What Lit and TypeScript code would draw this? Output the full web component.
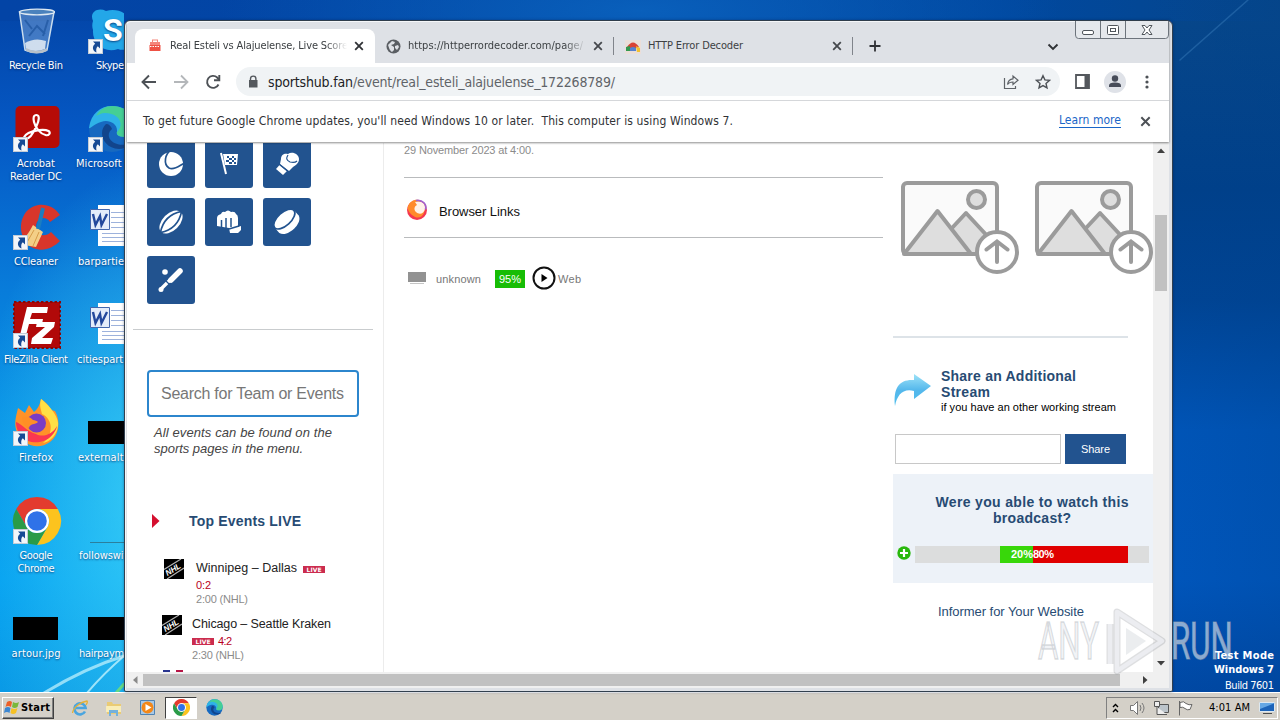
import { LitElement, html, svg, css } from 'lit';
import { customElement, property } from 'lit/decorators.js';

const chromePaths = svg`
  <path fill="#e33b2e" d="M24 12H44.8A24 24 0 0 0 3.2 12L13.6 30A12 12 0 0 1 24 12z"/>
  <path fill="#fcc31e" d="M44.8 12A24 24 0 0 1 24 48L34.4 30A12 12 0 0 0 24 12z"/>
  <path fill="#2a9b48" d="M3.2 12A24 24 0 0 0 24 48L34.4 30A12 12 0 0 1 13.6 30z"/>
  <circle cx="24" cy="24" r="12" fill="#fff"/>
  <circle cx="24" cy="24" r="9.8" fill="#2f72e8"/>`;

const edgePaths = svg`
  <circle cx="24" cy="24" r="23" fill="#1769c0"/>
  <path fill="#2fb3e8" d="M1 23C3 8 13 1 24 1c14 0 23 10 23 20 0 7-5 11-11 11-5 0-8-2-7-5 1-9-9-13-16-10C6 19 2 24 1 23z"/>
  <path fill="#45cf95" d="M24 1c14 0 23 10 23 20 0 7-5 11-11 11-5 0-8-2-7-5 8-8 2-19-12-19-4 0-7 2-9 3C12 4 18 1 24 1z"/>
  <path fill="#12458c" d="M18 19c-8 7-4 24 13 25 5 0 10-2 12-6-9 4-20 1-22-6-1-4 1-6 3-8-1-3-3-5-6-5z"/>`;

const wordPaths = svg`
  <path fill="#fff" d="M14 1H46V42H14z"/>
  <path stroke="#9db2dc" fill="none" d="M27 8.500H46M27 13.500H46M27 18.500H46M27 23.500H46M18 29.500H46M18 33.500H46M18 37.500H46"/>
  <path fill="#e4ecfa" stroke="#4467ad" d="M6.500 5.500h19v20h-19z"/>
  <path fill="none" stroke="#23489c" stroke-width="2.400" d="M9 10l2.500 11 4.500-9 1.500 9 5.500-11"/>`;

const icons: Record<string, unknown> = {
  bin: svg`
    <path fill="#b8d4ee" fill-opacity=".35" stroke="#c9dced" stroke-width="1.500" d="M7.500 4L13 42Q25 47 35 42L42 4z"/>
    <path fill="#e8eef5" fill-opacity=".85" d="M13 35q10-6 21-2l-1 8q-10 4-19 0z"/>
    <path stroke="#184f98" stroke-width="2" fill="none" opacity=".6" d="M17 28l8-10 8 8M13 12l7 9M36 12l-5 16"/>
    <ellipse cx="25" cy="4" rx="17.500" ry="2.800" fill="#4b82bd" stroke="#dfe9f2" stroke-width="1.300"/>
    <path d="M14 40q11 6 21 0v3q-10 5-21 0z" fill="#b7c0c9"/>`,
  skype: svg`
    <path fill="#23a7e8" d="M9 13C5 4 14-1 22 3 36-1 50 8 49 24c5 10-5 21-15 17C20 46 8 35 9 22c-1-3-1-6 0-9z"/>
    <text class="glyph" x="19" y="33" font-size="32">S</text>`,
  acrobat: svg`
    <rect x="3.500" width="44" height="42" rx="5" fill="#b60b06"/>
    <path fill="none" stroke="#fff" stroke-width="2.200" d="M24.500 9c3.500 0 2.500 6 0 11-3 7-7 13-11 13-3 0-1-4 3-6 6-3 16-4 20-2 3 2 0 5-3 4-5-1-10-7-11.500-13-1-4-.500-7 2.500-7z"/>`,
  edge: svg`<g transform="translate(4 -1)">${edgePaths}</g>`,
  ccleaner: svg`
    <path fill="#d8362b" d="M48 11C40-1 24-3 14 8 5 20 9 36 19 43c11 6 22 1 29-6l-9-9c-5 5-12 4-14-1-3-6 1-13 6-13 3 0 5 1 7 4z"/>
    <path fill="#f4cf87" d="M21 21l10 7-7 15-18-3c7-6 11-11 15-19z"/>
    <path stroke="#1b7dc0" stroke-width="4" d="M31 4L26 25"/>
    <path stroke="#d69b48" d="M22 26L14 40M27 28l-6 14" />`,
  word: wordPaths,
  filezilla: svg`
    <rect x="2" y="0" width="46" height="46" fill="#b10909" stroke="#8a0606" stroke-width="2" stroke-dasharray="2.500 2"/>
    <path fill="#fff" d="M15 5h21l-1 6H20l-2 6h13l-1 5H17l-4 15H7zM25 20h18l-1 5-12 11h11l-2 6H19l1-6 13-11h-9z"/>`,
  firefox: svg`
    <path fill="#ff9228" d="M6 8l7 5L17 5l5 7C25 10 28 5 29-1c4 3 8 6 10 11l4 1c6 10 4 25-5 31-11 8-27 4-32-8C1 25 4 17 6 8z"/>
    <path fill="#ffe046" d="M29-1c6 4 19 18 17 27-1 9-8 16-15 17 11-9 10-24-1-29-1-5-3-8-1-15z"/>
    <path fill="#fb3750" d="M4 22c0 15 14 25 30 18 6-3 10-9 11-14-4 8-14 12-21 8C14 31 9 23 4 22z"/>
    <circle cx="24.500" cy="23" r="9.500" fill="#7a3cc4"/>
    <path fill="#ff8f25" d="M10 17c5-1 9 0 11 3 2 0 4 1 5 2-3 3-8 1-9 6-5-2-7-6-7-11z"/>`,
  black: svg`<path d="M1 21H46V44H1z" fill="#000"/>`,
  line: svg`<path d="M6 44.500H48" stroke="#2b7f9d" stroke-width="1"/>`,
  chrome: svg`<g transform="translate(1 -1)">${chromePaths}</g>`,
};

const shortcut = svg`
  <rect x="1.500" y="31.500" width="14" height="14" fill="#f3f6fa" stroke="#c4ccd6"/>
  <path fill="#174a94" d="M6 33.500h7v7l-2.200-2.200C9 40 9 42 9.500 44.500 5 43 5 38 8.200 35.800z"/>`;

const desktopItems = [
  { icon: 'bin', label: ['Recycle Bin', 54] },
  { icon: 'acrobat', label: ['Acrobat', 38, 'Reader DC', 52], link: 1 },
  { icon: 'ccleaner', label: ['CCleaner', 44], link: 1 },
  { icon: 'filezilla', label: ['FileZilla Client', 64], link: 1 },
  { icon: 'firefox', label: ['Firefox', 34], link: 1 },
  { icon: 'chrome', label: ['Google', 33, 'Chrome', 37], link: 1 },
  { icon: 'black', label: ['artour.jpg', 49] },
  { icon: 'skype', label: ['Skype', 28], link: 4, left: 96 },
  { icon: 'edge', label: ['Microsoft Edge', 74], link: 4, left: 76 },
  { icon: 'word', label: ['barparties.rtf', 66], left: 78 },
  { icon: 'word', label: ['citiespartner.rtf', 76], left: 77 },
  { icon: 'black4', label: ['externaltest.jpg', 80], left: 78 },
  { icon: 'line', label: ['followswitch.rtf', 74], left: 79 },
  { icon: 'black4', label: ['hairpayment.jpg', 78], left: 79 },
];

const sports = [
  svg`<circle cx="24" cy="24" r="12" fill="#fff"/><path d="M24 10c-6 4-8 14-2 18 6 3 12-4 16-5" fill="none" stroke="#22538f" stroke-width="1.700"/>`,
  svg`<path d="M16 13l5 21" stroke="#fff" stroke-width="2"/><path d="M18 14h15l-1 11H20z" fill="#fff"/><path fill="#22538f" d="M22 16h2v2h-2zM27 16h2v2h-2zM24 18h3v2h-3zM29 18h2v2h-2zM21 20h3v2h-3zM27 20h2v2h-2zM24 22h3v2h-3zM29 22h2v2h-2z"/>`,
  svg`<path fill="#fff" d="M18 19c0-5 4-6 7-5 4-3 11 0 11 5 0 4-3 6-6 8l-4 4-9-7z"/><path d="M16.500 25l7.500 6-4 4-7-6z" fill="#fff"/><path d="M16.500 24.500l8.500 7M25 15c-2 3-2 5 2 7 4 1 6 0 7-1" fill="none" stroke="#22538f" stroke-width="1.200"/>`,
  svg`<g transform="rotate(-45 24 24)"><ellipse cx="24" cy="24" rx="14" ry="8.500" fill="#fff"/><path d="M9 24Q24 14 39 24Q24 34 9 24" fill="none" stroke="#22538f" stroke-width="1.700"/></g>`,
  svg`<path fill="#fff" d="M12 20q0-3 4-4 1-3 4-2 3-3 6 0 4-1 5 2 2 1 2 4v9l3-1v4l-3 3h-8l-1-5-12-2z"/><path d="M16.500 22v8M21 20v10M26 20v9M24 31l10-3" stroke="#22538f" stroke-width="1.500"/>`,
  svg`<g transform="rotate(-42 24 24)"><path d="M11 20v7c2 9 24 9 26 0v-7z" fill="#fff"/><ellipse cx="24" cy="20" rx="13" ry="6.500" fill="#fff" stroke="#22538f" stroke-width="1.700"/></g>`,
  svg`<circle cx="18" cy="16" r="2.800" fill="#fff"/><path d="M13.500 33.500L24 23" stroke="#fff" stroke-width="3.400"/><path d="M24 24l9-9" stroke="#fff" stroke-width="5.500" stroke-linecap="round"/><circle cx="14" cy="33.500" r="2.500" fill="#fff"/><path d="M19 25l4.500 4.500" stroke="#22538f" stroke-width="1.200"/>`,
];

const cross = (size: number, stroke: string) => html`
  <svg width=${size} height=${size} viewBox="0 0 10 10"><path d="M1.200 1.200l7.600 7.600M8.800 1.200L1.200 8.800" stroke=${stroke} stroke-width="1.800"/></svg>`;

/** One line of text spread over a given width. */
@customElement('fit-text')
export class FitText extends LitElement {
  @property({ type: String }) text = '';
  @property({ type: Number }) width = 0;

  static styles = css`
    :host {
      display: inline-block;
      white-space: pre;
      flex: none;
    }
  `;

  firstUpdated() {
    const span = this.renderRoot.querySelector('span')!;
    const natural = span.getBoundingClientRect().width;
    span.style.letterSpacing = `${(this.width - natural) / (this.text.length - 1)}px`;
    this.style.width = `${this.width}px`;
  }

  render() {
    return html`<span>${this.text}</span>`;
  }
}

const fit = (text: string, width: number, cls = '') =>
  html`<fit-text class=${cls} .text=${text} .width=${width}></fit-text>`;

@customElement('desktop-icons')
export class DesktopIcons extends LitElement {
  static styles = css`
    :host {
      display: grid;
      grid-template-rows: repeat(7, 98px);
      grid-auto-flow: column;
      grid-auto-columns: 72px;
      width: 124px;
      height: 691px;
      overflow: hidden;
      color: #fff;
      font: 11px/13px 'DejaVu Sans Condensed', 'DejaVu Sans', sans-serif;
      text-shadow: 0 1px 2px rgba(0, 30, 90, 0.7);
    }
    .item {
      display: flex;
      flex-direction: column;
      align-items: center;
      padding-top: 8px;
    }
    .item svg {
      overflow: visible;
      margin-bottom: 3px;
      flex: none;
    }
    .cut {
      align-self: flex-start;
    }
    .glyph {
      font-family: Roboto, sans-serif;
      font-style: normal;
      font-weight: 700;
      fill: #fff;
    }
  `;

  render() {
    return desktopItems.map((item) => {
      const [a, aw, b, bw] = item.label as [string, number, string?, number?];
      const name = item.icon === 'black4' ? 'black' : item.icon;
      const shift = item.icon === 'black4' || item.link === 4 ? 3 : 0;
      return html`
        <div class="item">
          <svg width="48" height="48" viewBox="0 0 48 48">
            <g transform=${item.icon === 'black4' ? 'translate(3 0)' : ''}>${icons[name]}</g>
            ${item.link ? svg`<g transform="translate(${shift} 0)">${shortcut}</g>` : ''}
          </svg>
          ${item.left
            ? html`<div class="cut" style="margin-left:${item.left - 72}px">${fit(a, aw)}</div>`
            : fit(a, aw)}
          ${b ? fit(b, bw!) : ''}
        </div>
      `;
    });
  }
}

@customElement('chrome-header')
export class ChromeHeader extends LitElement {
  static styles = css`
    :host {
      display: block;
      position: relative;
      z-index: 1;
      color: #3c4043;
      font: 11px/14px 'DejaVu Sans Condensed', 'DejaVu Sans', sans-serif;
      box-shadow: 0 1px 2px rgba(0, 0, 0, 0.45);
    }
    svg {
      display: block;
      flex: none;
    }
    .tabs {
      display: flex;
      height: 42px;
      box-sizing: border-box;
      padding: 8px 0 0 8px;
    }
    .tab {
      display: flex;
      align-items: center;
      width: 238px;
      height: 34px;
      box-sizing: border-box;
      padding: 0 10px 0 11px;
    }
    .tab.active {
      background: #fff;
      border-radius: 8px 8px 0 0;
      width: 240px;
      padding: 0 11px 0 12px;
    }
    .tab .name {
      flex: 1;
      overflow: hidden;
      margin: 0 7px;
    }
    .fade {
      mask-image: linear-gradient(90deg, #000 88%, transparent);
    }
    .tab.second {
      width: 238px;
    }
    .sep {
      width: 1px;
      height: 18px;
      margin-top: 8px;
      background: #80848b;
    }
    .plus {
      margin: 11px 0 0 16px;
    }
    .chev {
      margin: 14px 0 0 166px;
    }
    .toolbar {
      display: flex;
      align-items: center;
      height: 37px;
      padding-left: 14px;
      background: #fff;
    }
    .gap {
      margin-left: 16px;
    }
    .omni {
      display: flex;
      align-items: center;
      width: 824px;
      height: 29px;
      margin-left: 15px;
      padding: 0 9px 0 11px;
      box-sizing: border-box;
      border-radius: 15px;
      background: #f0f3f5;
      font-size: 14px;
      line-height: 18px;
      color: #5f6368;
    }
    .host {
      margin-left: 9px;
      color: #202124;
    }
    .push {
      margin-left: auto;
    }
    .side {
      margin-left: 15px;
    }
    .avatar {
      margin-left: 14px;
    }
    .dots {
      margin-left: 15px;
    }
    .info {
      display: flex;
      align-items: center;
      height: 42px;
      box-sizing: border-box;
      border-top: 1px solid #d5d7da;
      background: #fff;
      padding: 0 18px 1px 16px;
      font-size: 12px;
      color: #303236;
    }
    .learn {
      margin-left: auto;
      margin-right: 19px;
      color: #1a66c8;
      border-bottom: 1px solid #1a66c8;
      line-height: 13px;
    }
  `;

  render() {
    return html`
      <div class="tabs">
        <div class="tab active">
          <svg width="16" height="16"><path fill="#f4857b" d="M5 4V1.500h6V4h-1V2.500H6V4zM3 4h10v3H3z"/><path fill="#ee5144" d="M2.500 7h11v6h-11z"/><path stroke="#fff" stroke-dasharray="1.500 1" d="M3 8.500h10"/></svg>
          <div class="name fade">${fit('Real Esteli vs Alajuelense, Live Score', 178)}</div>
          ${cross(10, '#303236')}
        </div>
        <div class="tab second">
          <svg width="15" height="15" viewBox="0 0 15 15"><circle cx="7.500" cy="7.500" r="7" fill="#5a5e63"/><path fill="#dee1e6" d="M2 6l4-4 3 1-1 2-3 1 3 2v3l-2 2C3 11 3 8 2 6zM9 7l3-1 1 2-2 3-2-2z"/></svg>
          <div class="name fade">${fit('https://httperrordecoder.com/page/', 175)}</div>
          ${cross(10, '#45484d')}
        </div>
        <div class="sep"></div>
        <div class="tab">
          <svg width="16" height="16"><path fill="#f5dccb" d="M0 2h16v14H0z" opacity=".5"/><path fill="#d94235" d="M2 9q6-9 12 0l-3 1H5z"/><path fill="#339950" d="M1 9l4-1v5H1z"/><path fill="#f1c232" d="M11 8l4 2v4h-3z"/><path fill="#5682cf" d="M5 10q3-2 6 0v3H5z"/></svg>
          <div class="name">${fit('HTTP Error Decoder', 95)}</div>
          ${cross(10, '#45484d')}
        </div>
        <div class="sep"></div>
        <svg class="plus" width="12" height="12"><path d="M6 .500v11M.500 6h11" stroke="#303236" stroke-width="1.800"/></svg>
        <svg class="chev" width="12" height="8"><path d="M1.500 1.500L6 6l4.500-4.500" fill="none" stroke="#303236" stroke-width="1.900"/></svg>
      </div>
      <div class="toolbar">
        <svg width="16" height="16" fill="none" stroke="#4d5156" stroke-width="1.900"><path d="M15 8H2M8 1.500L1.500 8 8 14.500"/></svg>
        <svg class="gap" width="16" height="16" fill="none" stroke="#b4b7ba" stroke-width="1.800"><path d="M1 8h13M8 1.500L14.500 8 8 14.500"/></svg>
        <svg class="gap" width="16" height="16" fill="none" stroke="#4d5156" stroke-width="1.900"><path d="M13.500 10.500a6 6 0 1 1-1.300-7L14 5.500"/><path d="M14.300 1v5.300H9" /></svg>
        <div class="omni">
          <svg width="12" height="14"><path fill="#54585d" d="M2 5h8.500v7.500H2z"/><path d="M3.500 5.500V3.800a2.700 2.700 0 0 1 5.400 0v1.700" fill="none" stroke="#54585d" stroke-width="1.400"/></svg>
          ${fit('sportshub.fan', 85, 'host')}
          ${fit('/event/real_esteli_alajuelense_172268789/', 262)}
          <svg class="push" width="16" height="16" fill="none" stroke="#5f6368" stroke-width="1.200"><path d="M1.500 4v10.500h11V12"/><path d="M4.500 10.500C5 6.500 7 5 10 4.800V2l5 4.200-5 4.300V8c-3 0-4.500 1-5.500 2.500z"/></svg>
          <svg class="gap" width="16" height="16"><path d="M8 1.700l1.900 4.200 4.500.500-3.400 3 1 4.500L8 11.600 4 13.900l1-4.500-3.400-3 4.500-.500z" fill="none" stroke="#4d5156" stroke-width="1.400"/></svg>
        </div>
        <svg class="side" width="15" height="15"><path d="M1 1h13v13H1z" fill="#fff" stroke="#54585d" stroke-width="1.800"/><path d="M9.500 1H14v13H9.500z" fill="#54585d"/></svg>
        <svg class="avatar" width="22" height="22"><circle cx="11" cy="11" r="11" fill="#dfe2e8"/><circle cx="11" cy="7.500" r="3.200" fill="#474c59"/><path d="M5 16v-1.500q0-3 6-3t6 3V16z" fill="#474c59"/></svg>
        <svg class="dots" width="12" height="16" fill="#4d5156"><circle cx="6" cy="3" r="1.600"/><circle cx="6" cy="8" r="1.600"/><circle cx="6" cy="13" r="1.600"/></svg>
      </div>
      <div class="info">
        ${fit("To get future Google Chrome updates, you'll need Windows 10 or later.  This computer is using Windows 7.", 590)}
        <span class="learn">${fit('Learn more', 62)}</span>
        ${cross(11, '#4d5156')}
      </div>
    `;
  }
}

@customElement('left-menu')
export class LeftMenu extends LitElement {
  static styles = css`
    :host {
      display: block;
      width: 256px;
      height: 529px;
      overflow: hidden;
      border-right: 1px solid #ececec;
      font: 13px/16px 'Liberation Sans', sans-serif;
      color: #222;
      flex: none;
    }
    svg {
      display: block;
    }
    .sports {
      display: grid;
      grid-template-columns: repeat(3, 48px);
      gap: 10px;
      margin: -3px 0 0 20px;
    }
    .tile {
      height: 48px;
      border-radius: 3px;
      background: #22538f;
    }
    .rule {
      height: 1px;
      margin: 25px 10px 0 6px;
      background: #c9ccce;
    }
    .search {
      width: 212px;
      height: 47px;
      box-sizing: border-box;
      margin: 40px 0 0 20px;
      padding: 12px 12px 0;
      border: 2px solid #2c86cd;
      border-radius: 4px;
      font-size: 16px;
      line-height: 19px;
      color: #777;
    }
    .note {
      display: flex;
      flex-direction: column;
      margin: 8px 0 0 27px;
      font-style: italic;
      color: #444;
    }
    .title {
      display: flex;
      align-items: center;
      height: 16px;
      margin: 56px 0 0 25px;
      font-size: 14px;
      font-weight: 700;
      color: #274b73;
    }
    .title fit-text {
      margin-left: 29px;
    }
    .event {
      display: flex;
      gap: 12px;
      margin: 30px 0 0 37px;
      font-size: 12.5px;
    }
    .event.second {
      gap: 10px;
      margin: 10px 0 0 35px;
    }
    .event > svg {
      flex: none;
    }
    .line {
      display: flex;
      align-items: center;
      height: 18px;
      gap: 6px;
    }
    .small {
      height: 13px;
      font-size: 11px;
    }
    .small.score {
      height: 15px;
      gap: 4px;
      color: #b8001c;
    }
    .grey {
      color: #8b8b8b;
    }
    .live {
      width: 22px;
      height: 7px;
      margin-top: 2px;
      background: #cb2c4e;
      color: #fff;
      font: 700 6px/7.500px 'DejaVu Sans', sans-serif;
      text-align: center;
    }
    .peek {
      display: flex;
      gap: 6px;
      margin: 9px 0 0 36px;
    }
    .peek i {
      width: 7px;
      height: 3px;
      background: #28348f;
    }
    .peek i + i {
      background: #b71546;
    }
    .nhl {
      font: italic 700 8px 'Liberation Sans', sans-serif;
      fill: #fff;
    }
  `;

  nhl() {
    return html`
      <svg width="20" height="20">
        <path d="M0 0h20v20H0z"/>
        <path d="M0 10.500L17 0M3 20L20 9" stroke="#ddd" stroke-width="1.200" opacity=".8"/>
        <text class="nhl" transform="translate(3.500 17) rotate(-32)">NHL</text>
      </svg>`;
  }

  render() {
    return html`
      <div class="sports">
        ${sports.map((icon) => html`<div class="tile"><svg width="48" height="48">${icon}</svg></div>`)}
      </div>
      <div class="rule"></div>
      <div class="search">${fit('Search for Team or Events', 183)}</div>
      <div class="note">${fit('All events can be found on the', 178)}${fit('sports pages in the menu.', 149)}</div>
      <div class="title">
        <svg width="8" height="14"><path d="M0 0l7.500 7L0 14z" fill="#d5102f"/></svg>
        ${fit('Top Events LIVE', 112)}
      </div>
      <div class="event">
        ${this.nhl()}
        <div>
          <div class="line">${fit('Winnipeg – Dallas', 101)}<span class="live">${fit('LIVE', 15)}</span></div>
          <div class="line small score">${fit('0:2', 15)}</div>
          <div class="line small grey">${fit('2:00 (NHL)', 52)}</div>
        </div>
      </div>
      <div class="event second">
        ${this.nhl()}
        <div>
          <div class="line">${fit('Chicago – Seattle Kraken', 139)}</div>
          <div class="line small score"><span class="live">${fit('LIVE', 15)}</span>${fit('4:2', 14)}</div>
          <div class="line small grey">${fit('2:30 (NHL)', 52)}</div>
        </div>
      </div>
      <div class="peek"><i></i><i></i></div>
    `;
  }
}

@customElement('stream-list')
export class StreamList extends LitElement {
  static styles = css`
    :host {
      display: block;
      width: 479px;
      margin: 0 10px 0 20px;
      flex: none;
      font: 11px/14px 'Liberation Sans', sans-serif;
      color: #777;
    }
    .date {
      height: 34px;
      font-size: 11px;
      color: #8b8b8b;
    }
    .head {
      display: flex;
      align-items: center;
      gap: 10px;
      padding: 9px 0 0 2px;
      box-sizing: border-box;
      border: solid #b9bbbd;
      border-width: 1px 0;
      height: 61px;
      font-size: 13px;
      color: #111;
    }
    .head svg {
      margin-top: -5px;
    }
    .stream {
      display: flex;
      align-items: center;
      height: 26px;
      margin-top: 27px;
      padding-left: 4px;
    }
    .unknown {
      margin: 2px 0 0 10px;
    }
    .rate {
      width: 30px;
      height: 18px;
      margin: 2px 7px 0 14px;
      line-height: 18px;
      text-align: center;
      background: #17bd05;
      color: #fff;
    }
    .web {
      margin: 2px 0 0 2px;
    }
  `;

  render() {
    return html`
      <div class="date">${fit('29 November 2023 at 4:00.', 130)}</div>
      <div class="head">
        <svg width="23" height="24" viewBox="0 0 23 24">
          <circle cx="11" cy="12" r="10" fill="#f5374f"/>
          <path d="M1.500 10C3 3 9 1 13 2l3 4q4 3 2 9-3 6-9 4-6-3-7.500-9z" fill="#ff8a2b"/>
          <path d="M9 4c6-2 11 1 10 7-1 5-6 6-9 3-3-3-1-6 1-7z" fill="#fff1e8"/>
          <path d="M10 2.500c7-1 11 4 9.500 9" fill="none" stroke="#a063cf" stroke-width="1.700"/>
        </svg>
        ${fit('Browser Links', 81)}
      </div>
      <div class="stream">
        <svg width="18" height="14"><path d="M0 1h18v10H0z" fill="#929292"/><path d="M2 12.500h14" stroke="#c5c5c5"/></svg>
        ${fit('unknown', 45, 'unknown')}
        <span class="rate">${fit('95%', 22)}</span>
        <svg width="24" height="24"><circle cx="12" cy="12" r="10.500" fill="#fff" stroke="#111" stroke-width="2"/><path d="M9.500 8l6 4-6 4z"/></svg>
        ${fit('Web', 23, 'web')}
      </div>
    `;
  }
}

@customElement('share-panel')
export class SharePanel extends LitElement {
  static styles = css`
    :host {
      display: block;
      width: 260px;
      flex: none;
      overflow: hidden;
      font: 11px/14px 'Liberation Sans', sans-serif;
    }
    svg {
      display: block;
      flex: none;
    }
    .pictures {
      display: flex;
      gap: 14px;
      margin: 37px 0 0 7px;
    }
    .rule {
      width: 235px;
      height: 2px;
      margin-top: 60px;
      background: #dde3e8;
    }
    .share {
      display: flex;
      gap: 10px;
      margin-top: 30px;
    }
    .bold {
      font-size: 14px;
      line-height: 16px;
      font-weight: 700;
      color: #274b73;
    }
    .lines {
      display: flex;
      flex-direction: column;
    }
    .form {
      display: flex;
      gap: 4px;
      margin: 20px 0 0 2px;
    }
    .input {
      width: 166px;
      height: 30px;
      box-sizing: border-box;
      border: 1px solid #c8c8c8;
    }
    .button {
      width: 61px;
      height: 30px;
      line-height: 30px;
      text-align: center;
      color: #fff;
      background: #22538f;
    }
    .vote {
      height: 109px;
      box-sizing: border-box;
      margin-top: 10px;
      padding: 20px 0 0 4px;
      background: #edf2f8;
    }
    .question {
      display: flex;
      flex-direction: column;
      align-items: center;
      padding-left: 14px;
    }
    .result {
      display: flex;
      align-items: center;
      gap: 4px;
      margin-top: 20px;
      font-weight: 700;
      line-height: 17px;
      color: #fff;
    }
    .result > svg {
      margin-top: -3px;
    }
    .bar {
      display: flex;
      width: 234px;
      height: 17px;
      padding-left: 85px;
      box-sizing: border-box;
      background: #dcdddd;
    }
    .yes {
      width: 33px;
      background: #38d70a;
      text-align: right;
    }
    .no {
      width: 95px;
      background: #e00000;
    }
    .informer {
      margin: 20px 0 0 45px;
      font-size: 13px;
      line-height: 18px;
      color: #274b73;
    }
  `;

  picture() {
    return html`
      <svg width="120" height="96" fill="none" stroke="#9b9b9b" stroke-width="4" stroke-linejoin="round" stroke-linecap="round">
        <rect x="3" y="3" width="94" height="71" rx="4" fill="#fafafa"/>
        <path fill="#dedede" d="M52 48l14-15 25 27v14H40z"/>
        <path fill="#dedede" d="M4 74L37.500 31 71 74z"/>
        <circle cx="76.500" cy="19.500" r="8.500" fill="#dedede"/>
        <circle cx="97" cy="72" r="20" fill="#fff"/>
        <path d="M97 82V62M86.500 69.500L97 61.500l10.500 8" stroke-linejoin="miter"/>
      </svg>`;
  }

  render() {
    return html`
      <div class="pictures">${this.picture()}${this.picture()}</div>
      <div class="rule"></div>
      <div class="share">
        <svg width="38" height="42" viewBox="0 0 38 42">
          <defs><linearGradient id="arrow" x2="0" y2="1"><stop stop-color="#9ee3f8"/><stop offset=".5" stop-color="#55b8ec"/><stop offset="1" stop-color="#4cbdec"/></linearGradient></defs>
          <path fill="url(#arrow)" d="M2 38C0 19 7 11 21 12V6l17 12-17 13v-8C10 20 4 27 2 38z"/>
        </svg>
        <div class="lines">
          ${fit('Share an Additional', 135, 'bold')}
          ${fit('Stream', 49, 'bold')}
          ${fit('if you have an other working stream', 175)}
        </div>
      </div>
      <div class="form"><div class="input"></div><div class="button">${fit('Share', 29)}</div></div>
      <div class="vote">
        <div class="question">
          ${fit('Were you able to watch this', 193, 'bold')}
          ${fit('broadcast?', 78, 'bold')}
        </div>
        <div class="result">
          <svg width="14" height="14"><circle cx="7" cy="7" r="6.700" fill="#29b80c"/><path d="M7 3v8M3 7h8" stroke="#fff" stroke-width="2.200"/></svg>
          <div class="bar">
            <div class="yes">${fit('20%', 22)}</div>
            <div class="no">${fit('80%', 21)}</div>
          </div>
        </div>
      </div>
      <div class="informer">${fit('Informer for Your Website', 146)}</div>
    `;
  }
}

@customElement('task-bar')
export class TaskBar extends LitElement {
  static styles = css`
    :host {
      display: flex;
      align-items: center;
      height: 28px;
      box-sizing: border-box;
      padding: 3px 2px 1px;
      border-top: 1px solid #fff;
      background: #d4d0c8;
      color: #000;
      font: 11px/14px 'DejaVu Sans Condensed', 'DejaVu Sans', sans-serif;
    }
    svg {
      display: block;
      flex: none;
    }
    .start {
      display: flex;
      align-items: center;
      width: 52px;
      height: 22px;
      box-sizing: border-box;
      padding-left: 1px;
      border: 1px solid;
      border-color: #fff #404040 #404040 #fff;
      box-shadow: inset -1px -1px #808080;
      font-weight: 700;
    }
    .quick {
      display: flex;
      align-items: center;
      margin-left: 17px;
      gap: 16px;
    }
    .running {
      display: flex;
      align-items: center;
      justify-content: center;
      width: 32px;
      height: 22px;
      box-sizing: border-box;
      margin: 0 -7px 0 -8px;
      border: 1px solid;
      border-color: #404040 #fff #fff #404040;
      background: #fff;
    }
    .tray {
      display: flex;
      align-items: center;
      width: 172px;
      height: 22px;
      box-sizing: border-box;
      margin-left: auto;
      padding-left: 4px;
      border: 1px solid;
      border-color: #808080 #fff #fff #808080;
    }
    .tray svg {
      margin-right: 6px;
    }
    .tray svg:first-child {
      margin-right: 9px;
    }
    .clock {
      margin: 0 9px 0 8px;
    }
  `;

  render() {
    return html`
      <div class="start">
        <svg width="17" height="17"><path fill="#ed6028" d="M3 3q3-2 5 0L7 8Q4 6 1.500 8z"/><path fill="#7ab83b" d="M9 3q3 2 6 0l-1.500 5q-3 2-5.500 0z"/><path fill="#3c87d2" d="M1 9q3-2 5.500 0L5.500 14Q3 12 0 14z"/><path fill="#f6c124" d="M7.500 9q3 2 6 0L12 14q-3 2-5.500 0z"/></svg>
        ${fit('Start', 29)}
      </div>
      <div class="quick">
        <svg width="18" height="18"><path d="M14 12.500A5.600 5.600 0 1 1 14.600 9H5" fill="none" stroke="#4aa5df" stroke-width="2.600"/><path d="M1.500 14C2 9 9 3 16 2q1 1-1 4" fill="none" stroke="#e5b137" stroke-width="1.300"/></svg>
        <svg width="18" height="18"><path fill="#eacb74" d="M2 3h5l1 2h8v10H2z"/><path fill="#f9edb7" d="M1 7h15v6H1z"/><path fill="#74b1dc" d="M4 11h9v6h-2v-3H6v3H4z"/></svg>
        <svg width="18" height="18"><path fill="#a9c9e6" stroke="#4f83b3" d="M1.500 1.500h14v14h-14z"/><circle cx="8.500" cy="8.500" r="6" fill="#f38718"/><path fill="#fff" d="M6.500 5l6 3.500-6 3.500z"/></svg>
        <div class="running"><svg width="17" height="17" viewBox="0 0 48 48">${chromePaths}</svg></div>
        <svg width="17" height="17" viewBox="0 0 48 48">${edgePaths}</svg>
      </div>
      <div class="tray">
        <svg width="9" height="12" fill="none" stroke="#000" stroke-width="1.400"><path d="M2 5l2.500-2.500L7 5M2 10l2.500-2.500L7 10"/></svg>
        <svg width="18" height="16" fill="#fff" stroke="#777"><path d="M1.500 5.500h3l4-4v13l-4-4h-3z"/><path fill="none" d="M11 5q2 3 0 6M13 3q4 5 0 10"/></svg>
        <svg width="18" height="16"><path fill="#bcc4ca" stroke="#555" d="M5.500 4.500h10v8h-10z"/><path fill="#eee" stroke="#555" d="M1.500 1.500h5v5h-5zM4 7v7.500h10"/></svg>
        <svg width="18" height="16" fill="#fff" stroke="#666"><path d="M2.500 1v14.500M3 2.500q4-2 6 1 3 2 6 1l-2 5q-3 1-5-1-2-2-5-1z"/></svg>
        ${fit('4:01 AM', 41, 'clock')}
        <svg width="17" height="14"><path fill="#1d64b9" stroke="#dde8f0" d="M.500 1.500h15v9H.500z"/><path fill="#66a8e5" d="M1 2h15L1 8z"/><path d="M4 12.500h9" stroke="#4c4c4c"/></svg>
      </div>
    `;
  }
}

@customElement('app-root')
export class AppRoot extends LitElement {
  static styles = css`
    :host {
      display: flex;
      flex-direction: column;
      justify-content: space-between;
      position: relative;
      width: 1280px;
      height: 720px;
      overflow: hidden;
      background:
        linear-gradient(90deg, transparent 1150px, rgba(0, 64, 136, 0.2) 1280px),
        radial-gradient(ellipse 190px 340px at 160px 500px, rgba(72, 222, 250, 0.75), transparent),
        radial-gradient(ellipse 420px 90px at 640px 10px, rgba(10, 98, 190, 0.9), transparent),
        linear-gradient(90deg, #0344a6, #0048a0 1000px, #06468a) 0 0 / 1280px 21px no-repeat,
        linear-gradient(#07478a, #00408a 190px, #004494 300px, #0055b8 430px, #0056bc 580px, #0048a4 692px) 1172px 0 / 108px 720px no-repeat,
        linear-gradient(#0344a6, #0558c4 130px, #087cda 290px, #0796e8 440px, #049ff0 580px, #0a9ae6 692px);
    }
    svg {
      display: block;
    }
    .rays {
      position: absolute;
      left: 0;
      top: 0;
    }
    .window {
      position: absolute;
      left: 124px;
      top: 20px;
      width: 1049px;
      height: 672px;
      box-sizing: border-box;
      padding: 0 3px 2px 2px;
      border: 1px solid #32404f;
      border-radius: 6px 6px 2px 2px;
      background: #dee1e6;
      box-shadow: inset 1px 1px #f5f7f9, 0 0 3px rgba(0, 20, 60, 0.4);
    }
    .caption {
      position: absolute;
      z-index: 2;
      right: 3px;
      top: 0;
    }
    .main {
      display: grid;
      grid-template: 530px 16px / 1026px 16px;
    }
    .page {
      display: flex;
      height: 530px;
      overflow: hidden;
      background: #fff;
      padding-top: 1px;
      box-sizing: border-box;
    }
    .vbar,
    .hbar,
    .corner {
      display: flex;
      background: #f0f0f0;
    }
    .vbar {
      flex-direction: column;
      align-items: center;
    }
    .vthumb {
      width: 12px;
      height: 76px;
      margin: 59px 0 auto;
      background: #c1c1c1;
    }
    .hbar {
      align-items: center;
    }
    .hthumb {
      width: 977px;
      height: 12px;
      margin: 0 auto 0 1px;
      background: #c1c1c1;
    }
    .build {
      position: absolute;
      right: 6px;
      top: 649px;
      display: flex;
      flex-direction: column;
      align-items: flex-end;
      color: #fff;
      font: 700 11px/14px 'DejaVu Sans Condensed', 'DejaVu Sans', sans-serif;
    }
    .light {
      font-weight: 400;
      line-height: 17px;
    }
    .mark {
      position: absolute;
      left: 1030px;
      top: 600px;
    }
    .brand {
      font: 52px Roboto, sans-serif;
      fill: rgba(232, 236, 240, 0.6);
      stroke: rgba(165, 170, 176, 0.4);
      stroke-width: 1.5px;
    }
  `;

  render() {
    return html`
      <svg class="rays" width="1280" height="692">
        <g fill="none" stroke="#d6fbff" stroke-linecap="round">
          <path d="M44 693Q85 668 124 656" stroke-width="3" opacity=".65"/>
          <path d="M87 693Q103 674 124 656" stroke-width="2" opacity=".7"/>
          <path d="M116 693l8-9" stroke="#75e36b" stroke-width="3" opacity=".8"/>
          <path d="M1180 60l68-60" stroke="#4a8fca" stroke-width="1.500" opacity=".35"/>
        </g>
      </svg>
      <desktop-icons></desktop-icons>
      <div class="window">
        <svg class="caption" width="94" height="18" fill="none" stroke="#6d747c">
          <path d="M.500 0v14q0 3.500 3 3.500h87q3 0 3-3.500V0M25.500 0v17M50.500 0v17" fill="#e5e8ec"/>
          <rect x="7.500" y="9.500" width="11" height="4" rx="1.500" fill="#fff" stroke="#50565c"/>
          <rect x="32.500" y="4.500" width="11" height="9" rx="1" fill="#fff" stroke="#50565c"/>
          <rect x="35.500" y="7.500" width="5" height="3" stroke="#50565c"/>
          <path d="M67 4.500h3l2 2.500 2-2.500h3L74 9l3 4.500h-3L72 11l-2 2.500h-3L70 9z" fill="#fff" stroke="#50565c"/>
        </svg>
        <chrome-header></chrome-header>
        <div class="main">
          <div class="page">
            <left-menu></left-menu>
            <stream-list></stream-list>
            <share-panel></share-panel>
          </div>
          <div class="vbar">
            <svg width="16" height="14"><path d="M4 11l4-4.500 4 4.500z" fill="#404040"/></svg>
            <div class="vthumb"></div>
            <svg width="16" height="16"><path d="M4 5l4 4.500L12 5z" fill="#404040"/></svg>
          </div>
          <div class="hbar">
            <svg width="15" height="16"><path d="M10.500 4L6 8l4.500 4z" fill="#8a8a8a"/></svg>
            <div class="hthumb"></div>
            <svg width="16" height="16"><path d="M6 4l4.500 4L6 12z" fill="#404040"/></svg>
          </div>
          <div class="corner"></div>
        </div>
      </div>
      <svg class="mark" width="210" height="80">
        <text class="brand" transform="translate(8 59) scale(.6 1)">ANY</text>
        <text class="brand" transform="translate(141 59) scale(.6 1)">RUN</text>
        <g fill="none" stroke-linejoin="round">
          <path d="M80 24v40M87 12l45 29-45 30z" stroke="rgba(145,150,155,.3)" stroke-width="7"/>
          <path d="M80 24v40M87 12l45 29-45 30z" stroke="rgba(240,242,245,.75)" stroke-width="4.500"/>
          <path d="M96 28l20 13-20 14z" fill="rgba(205,210,215,.4)"/>
        </g>
      </svg>
      <div class="build">
        ${fit('Test Mode', 59)}
        ${fit('Windows 7', 60)}
        ${fit('Build 7601', 49, 'light')}
      </div>
      <task-bar></task-bar>
    `;
  }
}
